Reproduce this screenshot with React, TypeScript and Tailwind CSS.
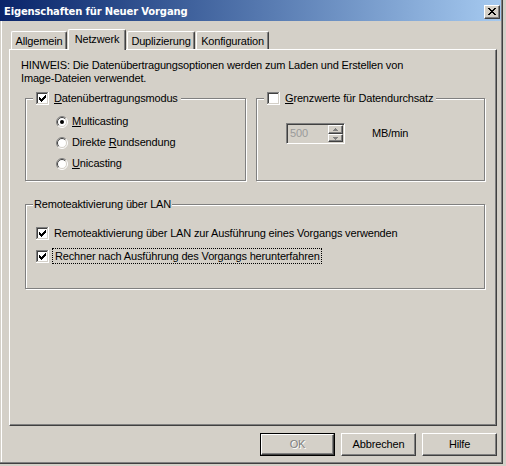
import React from "react";

const CheckBox = ({ checked }: { checked: boolean }) => (
  <svg width="13" height="13" viewBox="0 0 13 13" className="block shrink-0" shapeRendering="crispEdges">
    <rect x="0" y="0" width="12" height="1" fill="#808080" />
    <rect x="0" y="0" width="1" height="12" fill="#808080" />
    <rect x="1" y="1" width="10" height="1" fill="#404040" />
    <rect x="1" y="1" width="1" height="10" fill="#404040" />
    <rect x="0" y="12" width="13" height="1" fill="#ffffff" />
    <rect x="12" y="0" width="1" height="13" fill="#ffffff" />
    <rect x="1" y="11" width="11" height="1" fill="#D4D0C8" />
    <rect x="11" y="1" width="1" height="11" fill="#D4D0C8" />
    <rect x="2" y="2" width="9" height="9" fill="#ffffff" />
    {checked && (
      <g fill="#000">
        <rect x="3" y="5" width="1" height="3" />
        <rect x="4" y="6" width="1" height="3" />
        <rect x="5" y="7" width="1" height="3" />
        <rect x="6" y="6" width="1" height="3" />
        <rect x="7" y="5" width="1" height="3" />
        <rect x="8" y="4" width="1" height="3" />
        <rect x="9" y="3" width="1" height="3" />
      </g>
    )}
  </svg>
);

const Radio = ({ checked }: { checked: boolean }) => (
  <svg width="12" height="12" viewBox="0 0 12 12" className="block shrink-0">
    <circle cx="6" cy="6" r="5" fill="#ffffff" />
    <path d="M2.1 9.9 A5.5 5.5 0 0 1 9.9 2.1" stroke="#808080" fill="none" strokeWidth="1" />
    <path d="M9.9 2.1 A5.5 5.5 0 0 1 2.1 9.9" stroke="#ffffff" fill="none" strokeWidth="1" />
    <path d="M2.8 9.2 A4.5 4.5 0 0 1 9.2 2.8" stroke="#404040" fill="none" strokeWidth="1" />
    <path d="M9.2 2.8 A4.5 4.5 0 0 1 2.8 9.2" stroke="#D4D0C8" fill="none" strokeWidth="1" />
    {checked && <circle cx="6" cy="6" r="2" fill="#000" />}
  </svg>
);

const CloseX = () => (
  <svg width="8" height="7" viewBox="0 0 8 7" className="block" shapeRendering="crispEdges">
    <g fill="#000">
      <rect x="0" y="0" width="2" height="1" />
      <rect x="6" y="0" width="2" height="1" />
      <rect x="1" y="1" width="2" height="1" />
      <rect x="5" y="1" width="2" height="1" />
      <rect x="2" y="2" width="4" height="1" />
      <rect x="3" y="3" width="2" height="1" />
      <rect x="2" y="4" width="4" height="1" />
      <rect x="1" y="5" width="2" height="1" />
      <rect x="5" y="5" width="2" height="1" />
      <rect x="0" y="6" width="2" height="1" />
      <rect x="6" y="6" width="2" height="1" />
    </g>
  </svg>
);

const SpinArrow = ({ up }: { up: boolean }) => (
  <svg width="5" height="3" viewBox="0 0 5 3" className="block" shapeRendering="crispEdges">
    {up ? (
      <g fill="#808080">
        <rect x="2" y="0" width="1" height="1" />
        <rect x="1" y="1" width="3" height="1" />
        <rect x="0" y="2" width="5" height="1" />
      </g>
    ) : (
      <g fill="#808080">
        <rect x="0" y="0" width="5" height="1" />
        <rect x="1" y="1" width="3" height="1" />
        <rect x="2" y="2" width="1" height="1" />
      </g>
    )}
  </svg>
);

const Tab = ({ label, w }: { label: string; w: string }) => (
  <div
    className={`${w} h-[18px] ml-[1px] first:ml-0 flex items-center justify-center pt-[1px] border-t border-l border-r border-t-white border-l-white border-r-[#404040] rounded-t-[2px] shadow-[inset_-1px_0_0_#808080] whitespace-nowrap`}
  >
    {label}
  </div>
);

const RaisedButton = ({ children, isDefault, disabled }: { children: React.ReactNode; isDefault?: boolean; disabled?: boolean }) => {
  const inner = (
    <div
      className={`w-full h-full flex items-center justify-center border-t border-l border-t-white border-l-white border-r border-b border-r-[#404040] border-b-[#404040] shadow-[inset_-1px_-1px_0_#808080] ${
        disabled ? "text-[#808080] [text-shadow:1px_1px_0_#ffffff]" : ""
      }`}
    >
      {children}
    </div>
  );
  return isDefault ? (
    <div className="w-[75px] h-[23px] border border-black">{inner}</div>
  ) : (
    <div className="w-[75px] h-[23px]">{inner}</div>
  );
};

export default function App() {
  return (
    <div className="w-[506px] h-[466px] bg-[#D4D0C8] font-['Liberation_Sans',Arial,sans-serif] text-[11px] leading-[13px] text-black tracking-[-0.16px]">
      <div className="w-[503px] h-[464px] border-r border-b border-[#404040] flex flex-col">
        <div className="flex-1 flex flex-col border-r border-b border-[#808080]">
          {/* Title bar */}
          <div className="h-[21px] shrink-0 flex items-center justify-between bg-gradient-to-r from-[#0A246A] to-[#A6CAF0] pl-[4px] pr-[1px]">
            <span className="text-white font-['DejaVu_Sans',sans-serif] font-bold text-[10px] tracking-[-0.15px] mt-[2px] whitespace-nowrap">
              Eigenschaften für Neuer Vorgang
            </span>
            <div className="w-[16px] h-[14px] mt-[2px] bg-[#D4D0C8] flex items-center justify-center border-t border-l border-t-white border-l-white border-r border-b border-r-[#404040] border-b-[#404040] shadow-[inset_-1px_-1px_0_#808080]">
              <CloseX />
            </div>
          </div>

          {/* Body */}
          <div className="flex-1 ml-[1px] border-l border-white pl-[7px] pt-[8px]">
            {/* Tabs */}
            <div className="flex items-end h-[20px] pl-[2px]">
              <Tab label="Allgemein" w="w-[56px]" />
              <div className="w-[58px] h-[21px] ml-[1px] -mb-[1px] relative z-10 bg-[#D4D0C8] flex items-center justify-center pb-[2px] border-t border-l border-r border-t-white border-l-white border-r-[#404040] rounded-t-[2px] shadow-[inset_-1px_0_0_#808080] whitespace-nowrap">
                Netzwerk
              </div>
              <Tab label="Duplizierung" w="w-[68px]" />
              <Tab label="Konfiguration" w="w-[73px]" />
            </div>

            {/* Panel */}
            <div className="w-[488px] h-[377px] border-t border-l border-t-white border-l-white border-r border-b border-r-[#404040] border-b-[#404040] shadow-[inset_-1px_-1px_0_#808080]">
              <div className="pl-[11px] pt-[9px] whitespace-nowrap">
                HINWEIS: Die Datenübertragungsoptionen werden zum Laden und Erstellen von
                <br />
                Image-Dateien verwendet.
              </div>

              <div className="pl-[15px]">
                <div className="flex mt-[7px]">
                  {/* Group 1 */}
                  <fieldset className="w-[221px] h-[89px] border border-[#808080] shadow-[1px_1px_0_#ffffff,inset_1px_1px_0_#ffffff]">
                    <legend className="ml-[7px] px-[3px] bg-[#D4D0C8]">
                      <span className="flex items-center h-[13px] whitespace-nowrap">
                        <CheckBox checked />
                        <span className="ml-[5px]">
                          <span className="underline">D</span>atenübertragungsmodus
                        </span>
                      </span>
                    </legend>
                    <div className="pl-[30px] pt-[10px] flex flex-col gap-[8px]">
                      <div className="flex items-center h-[13px]">
                        <Radio checked />
                        <span className="ml-[4px]">
                          <span className="underline">M</span>ulticasting
                        </span>
                      </div>
                      <div className="flex items-center h-[13px]">
                        <Radio checked={false} />
                        <span className="ml-[4px]">
                          Direkte <span className="underline">R</span>undsendung
                        </span>
                      </div>
                      <div className="flex items-center h-[13px]">
                        <Radio checked={false} />
                        <span className="ml-[4px]">
                          <span className="underline">U</span>nicasting
                        </span>
                      </div>
                    </div>
                  </fieldset>

                  {/* Group 2 */}
                  <fieldset className="ml-[10px] w-[229px] h-[89px] border border-[#808080] shadow-[1px_1px_0_#ffffff,inset_1px_1px_0_#ffffff]">
                    <legend className="ml-[7px] px-[3px] bg-[#D4D0C8]">
                      <span className="flex items-center h-[13px] whitespace-nowrap">
                        <CheckBox checked={false} />
                        <span className="ml-[5px]">
                          <span className="underline">G</span>renzwerte für Datendurchsatz
                        </span>
                      </span>
                    </legend>
                    <div className="pl-[29px] pt-[18px] flex items-center">
                      <div className="w-[59px] h-[21px] flex border-t border-l border-t-[#808080] border-l-[#808080] border-r border-b border-r-white border-b-white shadow-[inset_1px_1px_0_#404040,inset_-1px_-1px_0_#D4D0C8] p-[1px]">
                        <div className="flex-1 flex items-center pl-[2px] text-[#9a9a9a]">500</div>
                        <div className="w-[15px] flex flex-col">
                          <div className="h-[9px] flex items-center justify-center bg-[#D4D0C8] border-t border-l border-t-white border-l-white border-r border-b border-r-[#404040] border-b-[#404040] shadow-[inset_-1px_-1px_0_#808080]">
                            <SpinArrow up />
                          </div>
                          <div className="h-[8px] flex items-center justify-center bg-[#D4D0C8] border-t border-l border-t-white border-l-white border-r border-b border-r-[#404040] border-b-[#404040] shadow-[inset_-1px_-1px_0_#808080]">
                            <SpinArrow up={false} />
                          </div>
                        </div>
                      </div>
                      <span className="ml-[27px]">MB/min</span>
                    </div>
                  </fieldset>
                </div>

                {/* Group 3 */}
                <fieldset className="mt-[17px] w-[460px] h-[91px] border border-[#808080] shadow-[1px_1px_0_#ffffff,inset_1px_1px_0_#ffffff]">
                  <legend className="ml-[7px] px-[1px] bg-[#D4D0C8]">
                    <span className="block h-[13px] whitespace-nowrap">Remoteaktivierung über LAN</span>
                  </legend>
                  <div className="pl-[10px] pt-[16px] flex flex-col gap-[8px]">
                    <div className="flex items-center h-[13px]">
                      <CheckBox checked />
                      <span className="ml-[5px] whitespace-nowrap">
                        Remoteaktivierung über LAN zur Ausführung eines Vorgangs verwenden
                      </span>
                    </div>
                    <div className="flex items-center h-[16px]">
                      <CheckBox checked />
                      <span className="ml-[3px] h-[16px] flex items-center pl-[2px] pr-[1px] border border-dotted border-black whitespace-nowrap">
                        Rechner nach Ausführung des Vorgangs herunterfahren
                      </span>
                    </div>
                  </div>
                </fieldset>
              </div>
            </div>

            {/* Buttons */}
            <div className="w-[488px] mt-[7px] flex justify-end gap-[6px]">
              <RaisedButton isDefault disabled>
                OK
              </RaisedButton>
              <RaisedButton>Abbrechen</RaisedButton>
              <RaisedButton>Hilfe</RaisedButton>
            </div>
          </div>
        </div>
      </div>
    </div>
  );
}
